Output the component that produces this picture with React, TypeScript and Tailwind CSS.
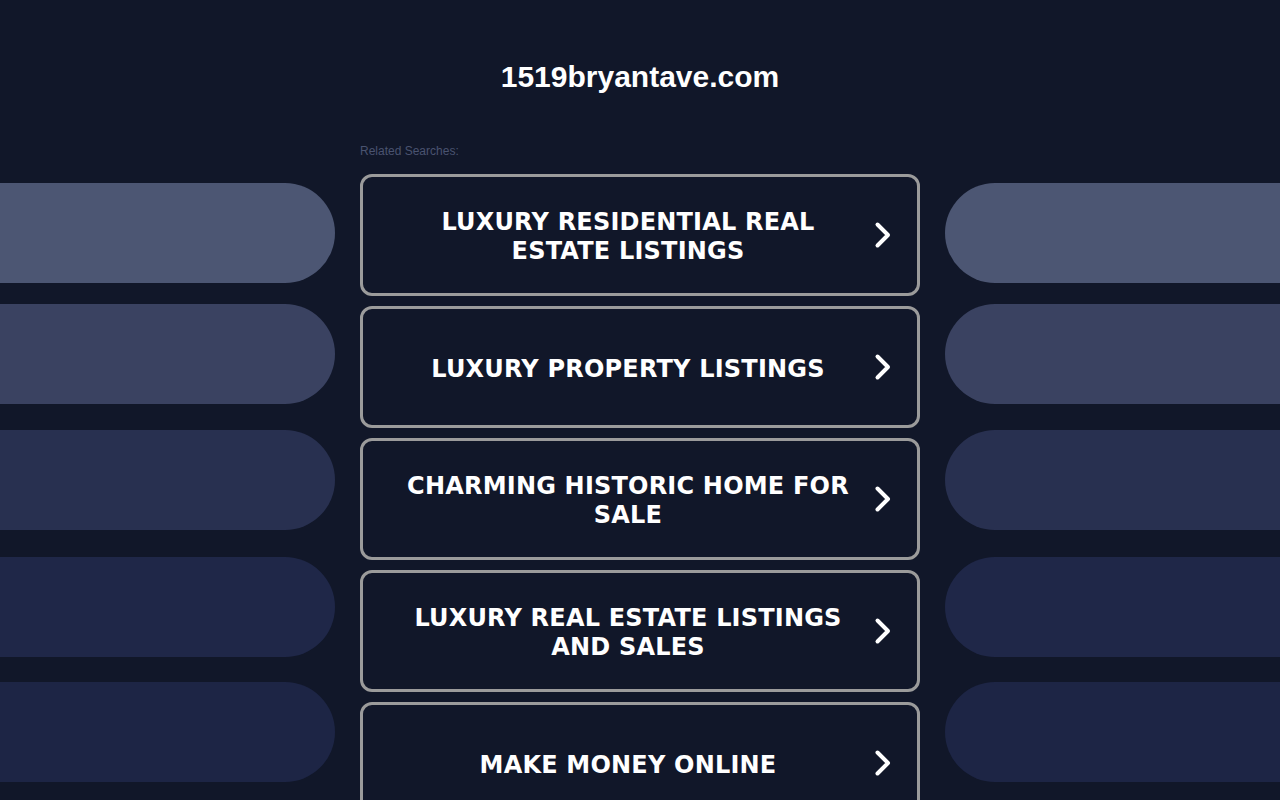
const links = [
  "LUXURY RESIDENTIAL REAL ESTATE LISTINGS",
  "LUXURY PROPERTY LISTINGS",
  "CHARMING HISTORIC HOME FOR SALE",
  "LUXURY REAL ESTATE LISTINGS AND SALES",
  "MAKE MONEY ONLINE",
];

function Chevron() {
  return (
    <svg width="24" height="28" viewBox="0 0 24 28" className="shrink-0">
      <polyline
        points="7.5,3.5 18,14 7.5,24.5"
        fill="none"
        stroke="#ffffff"
        strokeWidth="4"
        strokeLinecap="round"
        strokeLinejoin="round"
      />
    </svg>
  );
}

function SidePills({ side }: { side: "left" | "right" }) {
  const round = side === "left" ? "rounded-r-[50px]" : "rounded-l-[50px]";
  return (
    <div className="flex w-[335px] shrink-0 flex-col pt-[183px]">
      <div className={`h-[100px] bg-[#4c5673] ${round}`} />
      <div className={`mt-[21px] h-[100px] bg-[#3a4261] ${round}`} />
      <div className={`mt-[26px] h-[100px] bg-[#283050] ${round}`} />
      <div className={`mt-[27px] h-[100px] bg-[#1f2748] ${round}`} />
      <div className={`mt-[25px] h-[100px] bg-[#1d2545] ${round}`} />
    </div>
  );
}

export default function App() {
  return (
    <div className="flex h-[800px] w-[1280px] gap-[25px] overflow-hidden bg-[#111729]">
      <SidePills side="left" />

      <div className="flex w-[560px] shrink-0 flex-col">
        <h1 className="mt-[59px] text-center font-['Liberation_Sans',Arial,sans-serif] text-[30px] font-bold leading-[36px] text-white">
          1519bryantave.com
        </h1>
        <p className="mt-[49px] font-['Liberation_Sans',Arial,sans-serif] text-[12px] leading-[14px] text-[#4a5370]">
          Related Searches:
        </p>
        <div className="mt-[16px] flex flex-col gap-[10px]">
          {links.map((label) => (
            <a
              key={label}
              href="#"
              className="flex h-[122px] shrink-0 items-center rounded-[12px] border-[3px] border-[#9b9b9b] px-[23px]"
            >
              <span className="flex-1 px-[12px] pt-[4px] text-center font-['DejaVu_Sans',Verdana,sans-serif] text-[24px] font-bold leading-[29px] tracking-[0.2px] text-white">
                {label}
              </span>
              <Chevron />
            </a>
          ))}
        </div>
      </div>

      <SidePills side="right" />
    </div>
  );
}
